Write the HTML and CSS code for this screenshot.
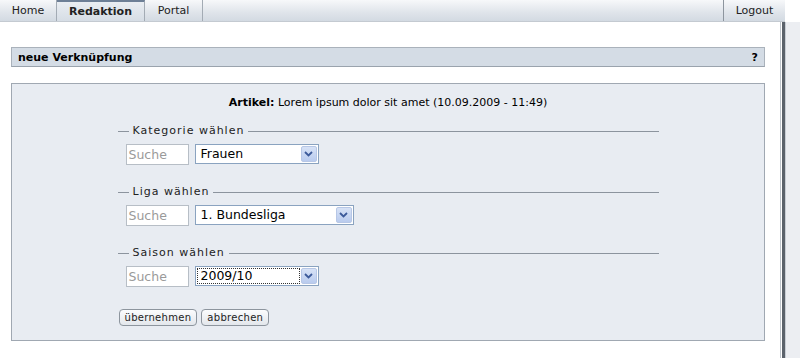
FILE: index.html
```html
<!DOCTYPE html>
<html lang="de">
<head>
<meta charset="utf-8">
<title>neue Verknüpfung</title>
<link rel="stylesheet" href="styles.css">
</head>
<body>
<div class="topbar">
  <nav class="tabs">
    <a class="tab">Home</a>
    <a class="tab active">Redaktion</a>
    <a class="tab">Portal</a>
  </nav>
  <a class="tab logout">Logout</a>
</div>
<div class="row">
  <main class="content">
    <div class="headbar">
      <span class="title">neue Verknüpfung</span>
      <span class="help">?</span>
    </div>
    <section class="panel">
      <p class="article"><b>Artikel:</b> Lorem ipsum dolor sit amet (10.09.2009 - 11:49)</p>
      <div class="group">
        <div class="legend">Kategorie wählen</div>
        <div class="fields">
          <span class="search">Suche</span>
          <div class="select w1"><span class="val">Frauen</span><span class="arrow"><svg width="9" height="6" viewBox="0 0 9 6"><path d="M1 1l3.5 3.5L8 1" fill="none" stroke="#3c5a9a" stroke-width="1.8"/></svg></span></div>
        </div>
      </div>
      <div class="group">
        <div class="legend">Liga wählen</div>
        <div class="fields">
          <span class="search">Suche</span>
          <div class="select w2"><span class="val">1. Bundesliga</span><span class="arrow"><svg width="9" height="6" viewBox="0 0 9 6"><path d="M1 1l3.5 3.5L8 1" fill="none" stroke="#3c5a9a" stroke-width="1.8"/></svg></span></div>
        </div>
      </div>
      <div class="group">
        <div class="legend">Saison wählen</div>
        <div class="fields">
          <span class="search">Suche</span>
          <div class="select w1"><span class="val focus">2009/10</span><span class="arrow"><svg width="9" height="6" viewBox="0 0 9 6"><path d="M1 1l3.5 3.5L8 1" fill="none" stroke="#3c5a9a" stroke-width="1.8"/></svg></span></div>
        </div>
      </div>
      <div class="buttons">
        <button class="btn">übernehmen</button>
        <button class="btn">abbrechen</button>
      </div>
    </section>
  </main>
  <div class="edge"></div>
</div>
</body>
</html>
```
FILE: styles.css
```css
html, body {
  margin: 0;
  padding: 0;
  background: #fff;
  font-family: "DejaVu Sans", Verdana, sans-serif;
  font-size: 11px;
  color: #000;
}

.topbar {
  width: 785px;
  height: 22px;
  box-sizing: border-box;
  display: flex;
  justify-content: space-between;
  background: linear-gradient(#f7f8fa, #dfe4ea 60%, #d3dae2);
  border-bottom: 1px solid #c4cad1;
}
.tabs { display: flex; }
.tab {
  display: flex;
  align-items: center;
  justify-content: center;
  height: 21px;
  box-sizing: border-box;
  border-right: 1px solid #a3abb4;
  color: #222;
  font-size: 11px;
}
.tabs .tab:nth-child(1) { width: 57px; }
.tabs .tab:nth-child(2) { width: 88px; }
.tabs .tab:nth-child(3) { width: 58px; }
.tab.active {
  font-weight: bold;
  border-top: 2px solid #6d7f96;
  background: linear-gradient(#e9edf2, #d6dde5);
}
.logout {
  width: 62px;
  border-right: none;
  border-left: 1px solid #8d959e;
}

.row { display: flex; }
.content {
  width: 781px;
  box-sizing: border-box;
  padding: 25px 15px 0 11px;
  border-right: 1px solid #bfc5cc;
  height: 336px;
}
.edge {
  width: 3px;
  margin-left: 1px;
  background: #5c636c;
  height: 336px;
}
.row::after {
  content: "";
  flex: 1;
  background: #eceef2;
  border-left: 1px solid #c9ced5;
}

.headbar {
  height: 20px;
  box-sizing: border-box;
  background: #d4dce5;
  border: 1px solid #aab2bb;
  border-bottom-color: #9aa3ad;
  display: flex;
  align-items: center;
  justify-content: space-between;
  padding: 0 6px 0 6px;
  font-weight: bold;
  font-size: 11px;
}

.panel {
  margin-top: 16px;
  height: 258px;
  box-sizing: border-box;
  background: #e8ecf2;
  border: 1px solid #a0a8b2;
  padding-top: 12px;
}
.article {
  margin: 0;
  text-align: center;
  line-height: 14px;
}

.group {
  width: 541px;
  margin: 14px auto 0;
}
.group + .group { margin-top: 20px; }
.legend {
  display: flex;
  align-items: center;
  gap: 4px;
  letter-spacing: 1px;
  line-height: 14px;
  color: #222;
}
.legend::before {
  content: "";
  width: 11px;
  height: 1px;
  background: #8c949e;
}
.legend::after {
  content: "";
  flex: 1;
  height: 1px;
  background: #8c949e;
}
.fields {
  display: flex;
  align-items: flex-start;
  gap: 6px;
  margin: 6px 0 0 8px;
}
.search {
  width: 63px;
  height: 21px;
  box-sizing: border-box;
  background: #fff;
  border: 1px solid #b7bec6;
  color: #9a9a9a;
  font-size: 12.5px;
  line-height: 19px;
  padding-left: 2px;
}
.select {
  height: 20px;
  box-sizing: border-box;
  background: #fff;
  border: 1px solid #8aa3c0;
  display: flex;
  align-items: center;
  justify-content: space-between;
  padding: 1px;
  font-size: 12.5px;
}
.select.w1 { width: 124px; }
.select.w2 { width: 159px; }
.val { padding-left: 4px; line-height: 16px; }
.val.focus {
  flex: 1;
  padding-left: 3px;
  margin-right: 1px;
  border: 1px dotted #333;
  line-height: 14px;
}
.arrow {
  width: 16px;
  height: 16px;
  box-sizing: border-box;
  background: linear-gradient(#d7e2f6, #b9cbee);
  border: 1px solid #b7c7e6;
  border-radius: 2px;
  display: flex;
  align-items: center;
  justify-content: center;
}

.buttons {
  display: flex;
  gap: 4px;
  width: 541px;
  margin: 22px auto 0;
  padding-left: 1px;
  box-sizing: border-box;
}
.btn {
  height: 17px;
  box-sizing: border-box;
  padding: 0 5px;
  border: 1px solid #8d959e;
  border-radius: 4px;
  background: linear-gradient(#fbfcfd, #e3e7ec);
  font-family: "DejaVu Sans", Verdana, sans-serif;
  font-size: 10px;
  letter-spacing: 0.3px;
  color: #222;
  line-height: 14px;
}
```
